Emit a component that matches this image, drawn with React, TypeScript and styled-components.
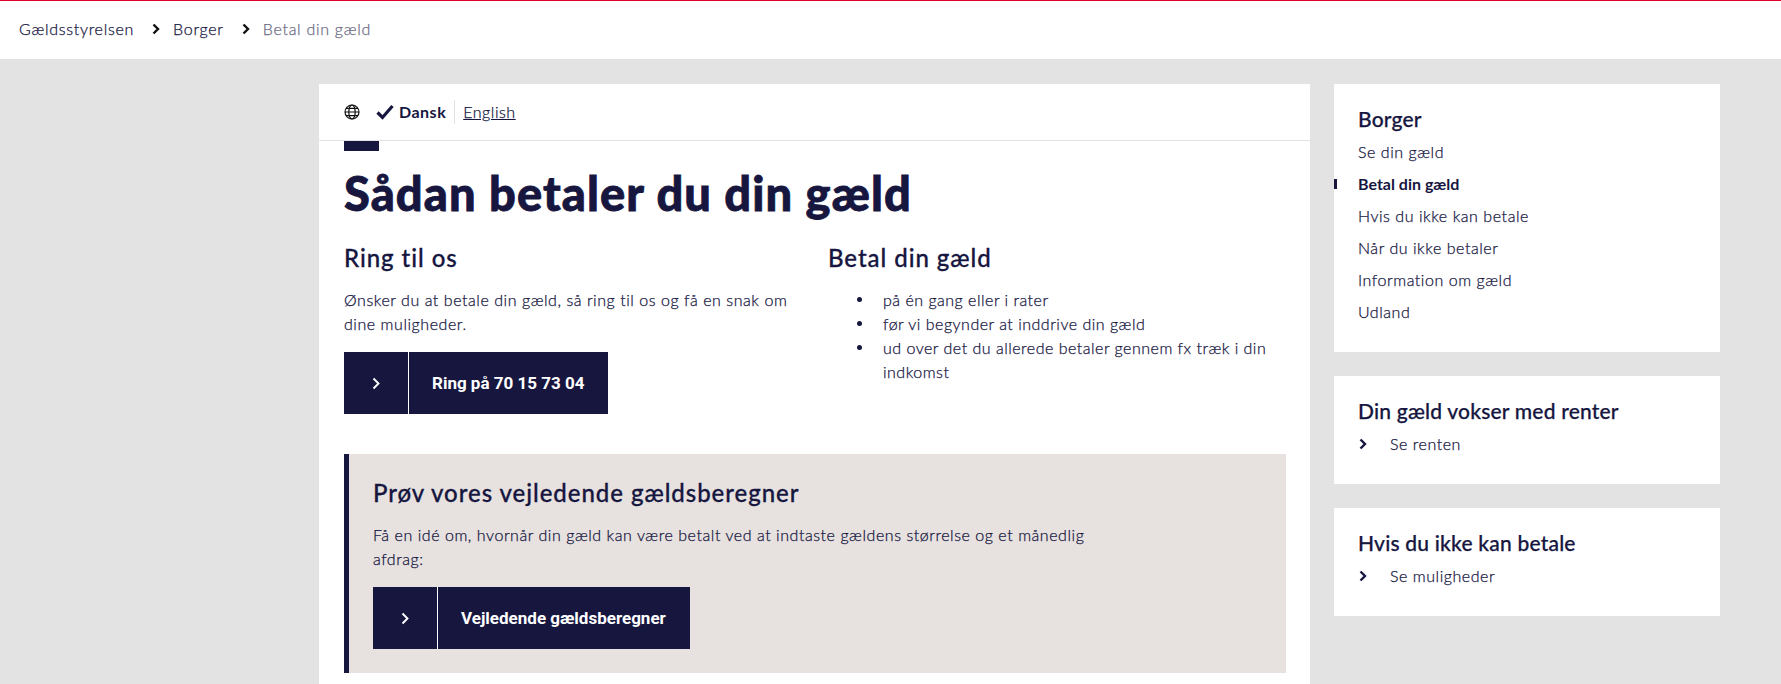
import React from "react";
import styled, { createGlobalStyle, css } from "styled-components";

const navy = "#16163f";

const GlobalStyle = createGlobalStyle`
  html, body {
    margin: 0;
    height: 100%;
    overflow: hidden;
    background: #e3e3e3;
  }
  body {
    font-family: Lato, "Noto Sans", sans-serif;
    font-size: 16px;
    line-height: 24px;
    color: ${navy};
  }
`;

// Lato light is a bit too thin next to the original, so thicken it slightly
const bodyType = css`
  font-weight: 300;
  letter-spacing: 0.55px;
  -webkit-text-stroke: 0.25px;
`;

const Header = styled.header`
  height: 58px;
  box-sizing: content-box;
  display: flex;
  align-items: center;
  padding-left: 19px;
  background: #fff;
  border-top: 1px solid #e4002b;
`;
const Crumb = styled.a<{ $current?: boolean }>`
  ${bodyType}
  letter-spacing: 0.72px;
  margin-bottom: 2px;
  color: ${(p) => (p.$current ? "#6c6c85" : navy)};
`;
const CrumbArrow = styled.svg`
  width: 8px;
  height: 12px;
  margin: 0 13px 2px 18px;
  fill: none;
  stroke: #111;
  stroke-width: 2.4;
`;

const Layout = styled.div`
  display: flex;
  align-items: flex-start;
  gap: 24px;
  padding: 25px 0 0 319px;
`;

const Main = styled.main`
  width: 991px;
  height: 600px;
  background: #fff;
`;
const LangBar = styled.div`
  height: 56px;
  display: flex;
  align-items: center;
  padding: 0 0 0 24px;
  border-bottom: 1px solid #e3e3e3;
`;
const Globe = styled.svg`
  width: 16px;
  height: 16px;
  margin: 0 16px 0 1px;
  fill: none;
  stroke: #111;
  stroke-width: 1.2;
`;
const Check = styled.svg`
  width: 18px;
  height: 16px;
  margin-right: 5px;
  fill: none;
  stroke: ${navy};
  stroke-width: 3.2;
`;
const LangActive = styled.strong`
  font-weight: 700;
  letter-spacing: 0.5px;
  padding-right: 8px;
  border-right: 1px solid #e3e3e3;
`;
const LangLink = styled.a`
  ${bodyType}
  margin-left: 8px;
  text-decoration: underline;
`;

const Content = styled.div`
  padding: 0 24px 0 25px;
`;
const Tab = styled.div`
  width: 35px;
  height: 10px;
  background: ${navy};
`;
const Title = styled.h1`
  margin: 14px 0 0;
  font-size: 47px;
  line-height: 56px;
  font-weight: 900;
  letter-spacing: 1.1px;
  -webkit-text-stroke: 0.8px;
`;
const Columns = styled.div`
  display: grid;
  grid-template-columns: 458px 1fr;
  column-gap: 26px;
  margin-top: 21px;
`;
const SubTitle = styled.h2`
  margin: 0 0 14px;
  font-size: 24px;
  line-height: 32px;
  font-weight: 500;
  letter-spacing: 0.95px;
  -webkit-text-stroke: 0.3px;
`;
const Text = styled.p`
  ${bodyType}
  margin: 0;
`;
const BulletList = styled.ul`
  ${bodyType}
  letter-spacing: 0.5px;
  list-style: none;
  margin: 0;
  padding: 0 0 0 55px;
`;
const Bullet = styled.li`
  position: relative;
  &::before {
    content: "";
    position: absolute;
    left: -26px;
    top: 9px;
    width: 5px;
    height: 5px;
    border-radius: 50%;
    background: ${navy};
  }
`;
const Cta = styled.a`
  display: inline-flex;
  height: 62px;
  margin-top: 16px;
  color: #fff;
  font-family: Roboto, sans-serif;
  font-weight: 700;
  font-size: 17px;
`;
const CtaIcon = styled.span`
  width: 64px;
  display: flex;
  align-items: center;
  justify-content: center;
  background: ${navy};
  border-right: 1px solid #fff;
`;
const CtaLabel = styled.span`
  display: flex;
  align-items: center;
  padding: 0 24px 0 23px;
  background: ${navy};
`;
const CtaArrow = styled.svg`
  width: 8px;
  height: 13px;
  fill: none;
  stroke: #fff;
  stroke-width: 1.9;
`;
const Banner = styled.section`
  margin-top: 40px;
  height: 219px;
  box-sizing: border-box;
  padding: 23px 24px 0 24px;
  background: #e7e2e0;
  border-left: 5px solid ${navy};
`;
const BannerText = styled(Text)`
  max-width: 740px;
`;

const Side = styled.aside`
  width: 386px;
  display: flex;
  flex-direction: column;
  gap: 24px;
`;
const SideCard = styled.section`
  background: #fff;
  padding: 19px 24px 24px;
`;
const SideTitle = styled.h3`
  margin: 0 0 1px;
  font-size: 21px;
  line-height: 32px;
  font-weight: 500;
  letter-spacing: 0.2px;
  -webkit-text-stroke: 0.25px;
`;
const NavList = styled.ul`
  list-style: none;
  margin: 0 0 0 -24px;
  padding: 0;
`;
const NavItem = styled.li<{ $active?: boolean }>`
  ${(p) => !p.$active && bodyType}
  height: 32px;
  line-height: 32px;
  padding-left: 24px;
  font-weight: ${(p) => (p.$active ? 700 : 300)};
  position: relative;
  &::before {
    content: "";
    display: ${(p) => (p.$active ? "block" : "none")};
    position: absolute;
    left: 0;
    top: 11px;
    width: 3px;
    height: 10px;
    background: ${navy};
  }
`;
const SideLink = styled.a`
  ${bodyType}
  display: flex;
  align-items: center;
  height: 32px;
`;
const SideArrow = styled.svg`
  width: 8px;
  height: 12px;
  margin: 0 23px 0 1px;
  fill: none;
  stroke: ${navy};
  stroke-width: 2.4;
`;

const Chevron = () => <polyline points="1.5,1.5 6,6 1.5,10.5" />;
const CtaChevron = () => <polyline points="1.5,1.5 6.5,6.5 1.5,11.5" />;

const navItems = ["Se din gæld", "Betal din gæld", "Hvis du ikke kan betale", "Når du ikke betaler", "Information om gæld", "Udland"];

export default function App() {
  return (
    <>
      <GlobalStyle />
      <Header>
        <Crumb>Gældsstyrelsen</Crumb>
        <CrumbArrow viewBox="0 0 8 12"><Chevron /></CrumbArrow>
        <Crumb>Borger</Crumb>
        <CrumbArrow viewBox="0 0 8 12"><Chevron /></CrumbArrow>
        <Crumb $current>Betal din gæld</Crumb>
      </Header>
      <Layout>
        <Main>
          <LangBar>
            <Globe viewBox="0 0 16 16">
              <circle cx="8" cy="8" r="7" />
              <ellipse cx="8" cy="8" rx="3.2" ry="7" />
              <path d="M1 8h14M2 4.4h12M2 11.6h12" />
            </Globe>
            <Check viewBox="0 0 18 16"><polyline points="1.5,8.5 6.5,13.5 16.5,2" /></Check>
            <LangActive>Dansk</LangActive>
            <LangLink>English</LangLink>
          </LangBar>
          <Content>
            <Tab />
            <Title>Sådan betaler du din gæld</Title>
            <Columns>
              <div>
                <SubTitle>Ring til os</SubTitle>
                <Text>Ønsker du at betale din gæld, så ring til os og få en snak om dine muligheder.</Text>
                <Cta>
                  <CtaIcon><CtaArrow viewBox="0 0 8 13"><CtaChevron /></CtaArrow></CtaIcon>
                  <CtaLabel>Ring på 70 15 73 04</CtaLabel>
                </Cta>
              </div>
              <div>
                <SubTitle>Betal din gæld</SubTitle>
                <BulletList>
                  <Bullet>på én gang eller i rater</Bullet>
                  <Bullet>før vi begynder at inddrive din gæld</Bullet>
                  <Bullet>ud over det du allerede betaler gennem fx træk i din indkomst</Bullet>
                </BulletList>
              </div>
            </Columns>
            <Banner>
              <SubTitle>Prøv vores vejledende gældsberegner</SubTitle>
              <BannerText>Få en idé om, hvornår din gæld kan være betalt ved at indtaste gældens størrelse og et månedlig afdrag:</BannerText>
              <Cta>
                <CtaIcon><CtaArrow viewBox="0 0 8 13"><CtaChevron /></CtaArrow></CtaIcon>
                <CtaLabel>Vejledende gældsberegner</CtaLabel>
              </Cta>
            </Banner>
          </Content>
        </Main>
        <Side>
          <SideCard>
            <SideTitle>Borger</SideTitle>
            <NavList>
              {navItems.map((item) => (
                <NavItem key={item} $active={item === "Betal din gæld"}>{item}</NavItem>
              ))}
            </NavList>
          </SideCard>
          <SideCard>
            <SideTitle>Din gæld vokser med renter</SideTitle>
            <SideLink><SideArrow viewBox="0 0 8 12"><Chevron /></SideArrow>Se renten</SideLink>
          </SideCard>
          <SideCard>
            <SideTitle>Hvis du ikke kan betale</SideTitle>
            <SideLink><SideArrow viewBox="0 0 8 12"><Chevron /></SideArrow>Se muligheder</SideLink>
          </SideCard>
        </Side>
      </Layout>
    </>
  );
}
